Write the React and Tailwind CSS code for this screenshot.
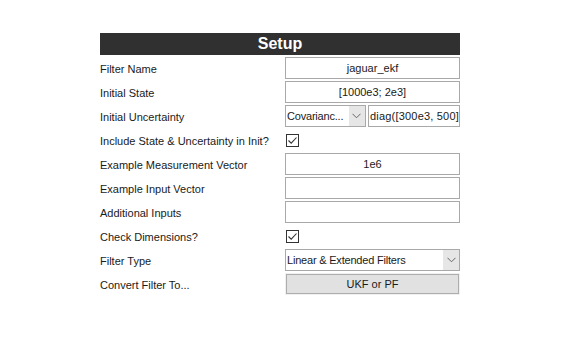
import React from 'react';

const font = { fontFamily: '"Liberation Sans", Arial, sans-serif' };

function Row({ label, children }) {
  return (
    <div className="flex items-center h-[22px] mt-[2px]">
      <div className="w-[185px] shrink-0 pt-[2px] text-[11px] text-[#1a1a1a] leading-none">{label}</div>
      <div className="w-[175px] h-full flex items-center">{children}</div>
    </div>
  );
}

function TextBox({ value, left }) {
  return (
    <div
      className={
        'w-full h-full border border-[#a9a9a9] bg-white flex items-center overflow-hidden whitespace-nowrap text-[11px] text-[#1a1a1a] ' +
        (left ? 'justify-start pl-[1px] tracking-[0.2px]' : 'justify-center')
      }
    >
      {value}
    </div>
  );
}

function Chevron() {
  return (
    <svg width="9" height="6" viewBox="0 0 9 6" fill="none">
      <path d="M0.5 0.8 L4.5 4.8 L8.5 0.8" stroke="#666" strokeWidth="1" />
    </svg>
  );
}

function Select({ value, className }) {
  return (
    <div className={'h-full border border-[#a9a9a9] bg-white flex items-stretch ' + className}>
      <div className="flex-1 min-w-0 flex items-center pl-[1px] text-[11px] tracking-[-0.2px] text-[#1a1a1a] whitespace-nowrap">
        {value}
      </div>
      <div className="w-[16px] shrink-0 bg-[#e6e6e6] flex items-center justify-center">
        <Chevron />
      </div>
    </div>
  );
}

function Check() {
  return (
    <div className="ml-[1px] w-[13px] h-[13px] border border-[#333] bg-white flex items-center justify-center">
      <svg width="11" height="11" viewBox="0 0 11 11" fill="none">
        <path d="M1.5 5.5 L4.2 8.2 L9.5 2.5" stroke="#333" strokeWidth="1.1" />
      </svg>
    </div>
  );
}

export default function App() {
  return (
    <div className="w-[561px] h-[363px] bg-white" style={font}>
      <div className="ml-[100px] pt-[33px] w-[360px] flex flex-col">
        <div className="h-[22px] bg-[#303030] text-white font-bold text-[16px] flex items-center justify-center leading-none">
          Setup
        </div>
        <Row label="Filter Name">
          <TextBox value="jaguar_ekf" />
        </Row>
        <Row label="Initial State">
          <TextBox value="[1000e3; 2e3]" />
        </Row>
        <Row label="Initial Uncertainty">
          <div className="flex w-full h-full gap-[2px]">
            <Select value="Covarianc..." className="w-[86px]" />
            <div className="flex-1 h-full">
              <TextBox value="diag([300e3, 500]" left />
            </div>
          </div>
        </Row>
        <Row label="Include State & Uncertainty in Init?">
          <Check />
        </Row>
        <Row label="Example Measurement Vector">
          <TextBox value="1e6" />
        </Row>
        <Row label="Example Input Vector">
          <TextBox value="" />
        </Row>
        <Row label="Additional Inputs">
          <TextBox value="" />
        </Row>
        <Row label="Check Dimensions?">
          <Check />
        </Row>
        <Row label="Filter Type">
          <Select value="Linear & Extended Filters" className="w-full" />
        </Row>
        <Row label="Convert Filter To...">
          <div className="w-full h-full p-[1px] bg-[#f0f0f0]">
            <div className="w-full h-full border border-[#adadad] bg-[#e1e1e1] flex items-center justify-center text-[11px] text-[#1a1a1a]">
              UKF or PF
            </div>
          </div>
        </Row>
      </div>
    </div>
  );
}
